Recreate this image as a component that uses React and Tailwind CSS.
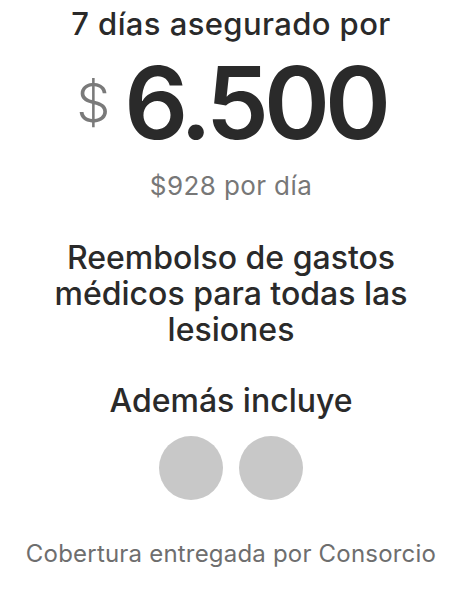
export default function App() {
  return (
    <div
      className="w-[462px] h-[594px] bg-white flex flex-col items-center text-center text-[#2a2a2a]"
      style={{ fontFamily: "Inter, 'Noto Sans', sans-serif" }}
    >
      <h1 className="mt-[4px] text-[31px] leading-[40px] font-medium tracking-[0.4px]">7 días asegurado por</h1>

      <div className="mt-[9px] flex items-center gap-[14px]">
        <span className="text-[54px] leading-none text-[#7a7a7a] font-light">$</span>
        <span className="text-[100px] leading-[100px] font-semibold tracking-[-5px]">6.500</span>
      </div>

      <p className="mt-[17px] text-[26px] leading-[32px] text-[#777777] tracking-[0.4px]">$928 por día</p>

      <p className="mt-[38px] px-[40px] text-[32px] leading-[36px] font-medium">
        Reembolso de gastos médicos para todas las lesiones
      </p>

      <h2 className="mt-[33px] text-[32px] leading-[40px] font-medium">Además incluye</h2>

      <div className="mt-[15px] flex gap-[16px]">
        <div className="w-[64px] h-[64px] rounded-full bg-[#c8c8c8]" />
        <div className="w-[64px] h-[64px] rounded-full bg-[#c8c8c8]" />
      </div>

      <p className="mt-[39px] text-[24px] leading-[30px] text-[#6e6e6e] tracking-[0.2px]">Cobertura entregada por Consorcio</p>
    </div>
  );
}
